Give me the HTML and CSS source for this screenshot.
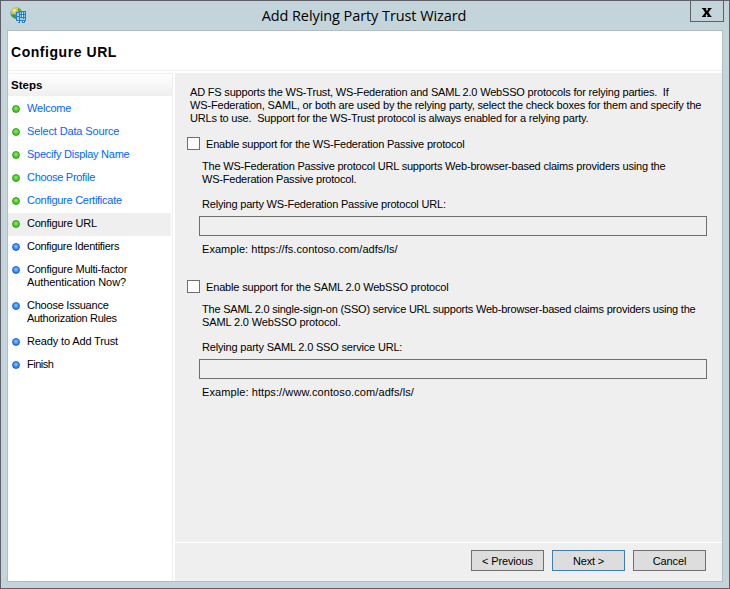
FILE: index.html
```html
<!DOCTYPE html>
<html lang="en">
<head>
<meta charset="utf-8">
<title>Add Relying Party Trust Wizard</title>
<link rel="stylesheet" href="styles.css">
</head>
<body>
<div class="window">
  <header class="titlebar">
    <svg class="app-icon" viewBox="0 0 17 17">
      <defs>
        <radialGradient id="globe" cx=".35" cy=".3" r=".8"><stop offset="0" stop-color="#d5f1fb"/><stop offset=".5" stop-color="#469ed0"/><stop offset="1" stop-color="#14529b"/></radialGradient>
      </defs>
      <circle cx="6.2" cy="6" r="5.8" fill="url(#globe)"/>
      <path d="M1 4Q3 0 7 .5L9 2 6 4 5 7 2 8Z" fill="#e6c83a"/>
      <path d="M8 1Q11 2 11.500 5L8 5Z" fill="#6cac36"/>
      <path d="M1 8L4 7 6 9 5 11Q2 10 1 8Z" fill="#3b9b3d"/>
      <path d="M3 3L5 2 6 3 4 5Z" fill="#f8f5c8"/>
      <path d="M6 5H9V4H16V14H15V16H12V14H10V16H8V14H6Z" fill="#2a7fc4"/>
      <path d="M10 5H15V13H10ZM7 6H9V13H7Z" fill="#8fd2f3"/>
      <path d="M11.500 5V10M13.500 5V12M10 7.500H15M10 10.500H15M7 9.500H9" stroke="#2a7fc4" stroke-width="1"/>
      <path d="M12 6H13V7H12ZM12 8H13V10H12ZM8 14H9V15H8ZM13 14H14V15H13Z" fill="#e4faff"/>
    </svg>
    <h1 class="title">Add Relying Party Trust Wizard</h1>
    <div class="close"><svg viewBox="0 0 10 9"><path d="M0 0H4.200V1H3.800L5 3 6.200 1H5.800V0H9.500V1H8.900L6.500 4.500 8.900 8H9.500V9H5.300V8H5.900L4.600 6 3.400 8H4V9H0V8H.6L3.100 4.500 .8 1H0Z"/></svg></div>
  </header>
  <div class="client">
    <h2 class="heading"><span>Configure URL</span></h2>
    <div class="body">
      <nav class="sidebar">
        <h3 class="steps-title"><span>Steps</span></h3>
        <ul class="steps">
          <li class="step done"><i></i><span class="s1">Welcome</span></li>
          <li class="step done"><i></i><span class="s2">Select Data Source</span></li>
          <li class="step done"><i></i><span class="s3">Specify Display Name</span></li>
          <li class="step done"><i></i><span class="s4">Choose Profile</span></li>
          <li class="step done"><i></i><span class="s5">Configure Certificate</span></li>
          <li class="step done current"><i></i><span class="s6">Configure URL</span></li>
          <li class="step"><i></i><span class="s7">Configure Identifiers</span></li>
          <li class="step"><i></i><div><span class="s8">Configure Multi-factor</span><br><span class="s9">Authentication Now?</span></div></li>
          <li class="step"><i></i><div><span class="s10">Choose Issuance</span><br><span class="s11">Authorization Rules</span></div></li>
          <li class="step"><i></i><span class="s12">Ready to Add Trust</span></li>
          <li class="step"><i></i><span class="s13">Finish</span></li>
        </ul>
      </nav>
      <main class="panel">
        <div class="page">
          <p class="intro"><span class="p1">AD FS supports the WS-Trust, WS-Federation and SAML 2.0 WebSSO protocols for relying parties.&nbsp; If</span><br><span class="p2">WS-Federation, SAML, or both are used by the relying party, select the check boxes for them and specify the</span><br><span class="p3">URLs to use.&nbsp; Support for the WS-Trust protocol is always enabled for a relying party.</span></p>
          <section class="option">
            <div class="check"><b></b><span class="a1">Enable support for the WS-Federation Passive protocol</span></div>
            <p class="desc"><span class="a2">The WS-Federation Passive protocol URL supports Web-browser-based claims providers using the</span><br><span class="a3">WS-Federation Passive protocol.</span></p>
            <p class="label"><span class="a4">Relying party WS-Federation Passive protocol URL:</span></p>
            <div class="field"></div>
            <p class="example"><span class="a5">Example: https://fs.contoso.com/adfs/ls/</span></p>
          </section>
          <section class="option">
            <div class="check"><b></b><span class="b1">Enable support for the SAML 2.0 WebSSO protocol</span></div>
            <p class="desc"><span class="b2">The SAML 2.0 single-sign-on (SSO) service URL supports Web-browser-based claims providers using the</span><br><span class="b3">SAML 2.0 WebSSO protocol.</span></p>
            <p class="label"><span class="b4">Relying party SAML 2.0 SSO service URL:</span></p>
            <div class="field"></div>
            <p class="example"><span class="b5">Example: https://www.contoso.com/adfs/ls/</span></p>
          </section>
        </div>
        <footer class="buttons">
          <div class="btn"><span>&lt; Previous</span></div>
          <div class="btn default"><span>Next &gt;</span></div>
          <div class="btn"><span>Cancel</span></div>
        </footer>
      </main>
    </div>
  </div>
</div>
</body>
</html>
```
FILE: styles.css
```css
* { box-sizing: border-box; margin: 0; padding: 0; }
body { width: 730px; height: 589px; overflow: hidden; font: 11px/13px "Liberation Sans", Arial, sans-serif; color: #000; white-space: nowrap; }
.window { width: 730px; height: 589px; border: 1px solid #5f6069; background: #c3d5db; padding: 0 6px 6px; display: flex; flex-direction: column; }
.titlebar { height: 29px; display: flex; justify-content: space-between; align-items: flex-start; }
.app-icon { width: 17px; height: 17px; margin: 6px 0 0 3px; }
.title { font: 400 14.5px/20px "Open Sans", "Noto Sans", sans-serif; letter-spacing: -.08px; margin: 5px 0 0 11px; }
.close { width: 34px; height: 22px; margin: -1px -1px 0 0; border: 1px solid #5f6069; display: flex; justify-content: center; padding-top: 7px; }
.close svg { width: 10px; height: 9px; }
.client { flex: 1; border: 1px solid #b1bdc2; background: #fff; display: flex; flex-direction: column; }
.heading { height: 40px; border-bottom: 1px solid #efefef; font: 700 14px/16px "Liberation Sans", Arial, sans-serif; letter-spacing: .55px; padding: 13px 0 0 3px; }
.body { flex: 1; display: flex; gap: 2px; padding-top: 2px; }
.sidebar { width: 165px; border-top: 1px solid #efefef; border-right: 1px solid #efefef; }
.steps-title { height: 22px; font: 700 11.5px/13px "Liberation Sans", Arial, sans-serif; padding: 5px 0 0 3px; background: linear-gradient(#fff, #efefef); }
.steps { list-style: none; padding: 2px 1px 0 0; }
.step { display: flex; padding: 4px 0 6px 4px; gap: 7px; }
.step i { width: 8px; height: 8px; margin-top: 3px; border-radius: 50%; border: 1px solid #1a62d6; background: radial-gradient(circle at 50% 40%, #8fc8ff, #1c78f2 75%); }
.step.done i { border-color: #2fa318; background: radial-gradient(circle at 50% 40%, #9bea70, #37b81a 75%); }
.done { color: #0066ff; }
.current { background: #efefef; color: #000; }
.panel { flex: 1; display: flex; flex-direction: column; background: #efefef; }
.page { flex: 1; padding: 13px 0 0 12px; }
.intro { padding-left: 3px; margin-bottom: 12px; }
.option { height: 143px; }
.check { display: flex; height: 13px; gap: 6px; }
.check b { width: 13px; height: 13px; border: 1px solid #6e6e6e; background: #fff; }
.check span { padding-top: 1px; }
.desc { padding: 10px 0 0 15px; }
.label { padding: 12px 0 0 15px; }
.field { width: 508px; height: 20px; margin: 5px 0 0 12px; border: 1px solid #6e6e6e; }
.example { padding: 7px 0 0 15px; }
.buttons { height: 39px; border-top: 1px solid #fff; display: flex; justify-content: flex-end; gap: 8px; padding: 7px 16px 0 0; }
.btn { width: 73px; height: 21px; border: 1px solid #707070; background: #ddd; text-align: center; line-height: 21px; letter-spacing: -.15px; }
.default { border-color: #3c7fb1; }

/* per-line tracking */
.s1 { letter-spacing: -.2px; }
.s2, .s12 { letter-spacing: -.14px; }
.s3, .s5 { letter-spacing: -.26px; }
.s4, .s7, .s11 { letter-spacing: -.3px; }
.s6, .s8, .s10 { letter-spacing: -.23px; }
.s9 { letter-spacing: -.1px; }
.s13 { letter-spacing: -.5px; }
.p1 { letter-spacing: -.186px; }
.p2 { letter-spacing: -.168px; }
.p3 { letter-spacing: -.18px; }
.a1, .a2 { letter-spacing: -.2px; }
.a3 { letter-spacing: -.21px; }
.a4 { letter-spacing: -.19px; }
.a5 { letter-spacing: .045px; }
.b1 { letter-spacing: -.16px; }
.b2 { letter-spacing: -.217px; }
.b3 { letter-spacing: -.13px; }
.b4 { letter-spacing: -.185px; }
.b5 { letter-spacing: .085px; }
```
